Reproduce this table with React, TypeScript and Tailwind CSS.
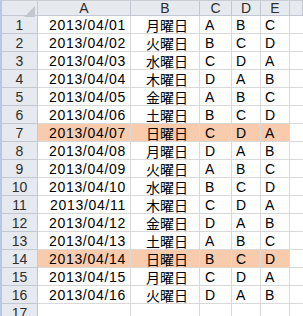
import React from 'react';

interface RowData {
    date: string
    day: string
    c: string
    d: string
    e: string
}

const rows: RowData[] = [
    { date: "2013/04/01", day: "月曜日", c: "A", d: "B", e: "C" },
    { date: "2013/04/02", day: "火曜日", c: "B", d: "C", e: "D" },
    { date: "2013/04/03", day: "水曜日", c: "C", d: "D", e: "A" },
    { date: "2013/04/04", day: "木曜日", c: "D", d: "A", e: "B" },
    { date: "2013/04/05", day: "金曜日", c: "A", d: "B", e: "C" },
    { date: "2013/04/06", day: "土曜日", c: "B", d: "C", e: "D" },
    { date: "2013/04/07", day: "日曜日", c: "C", d: "D", e: "A" },
    { date: "2013/04/08", day: "月曜日", c: "D", d: "A", e: "B" },
    { date: "2013/04/09", day: "火曜日", c: "A", d: "B", e: "C" },
    { date: "2013/04/10", day: "水曜日", c: "B", d: "C", e: "D" },
    { date: "2013/04/11", day: "木曜日", c: "C", d: "D", e: "A" },
    { date: "2013/04/12", day: "金曜日", c: "D", d: "A", e: "B" },
    { date: "2013/04/13", day: "土曜日", c: "A", d: "B", e: "C" },
    { date: "2013/04/14", day: "日曜日", c: "B", d: "C", e: "D" },
    { date: "2013/04/15", day: "月曜日", c: "C", d: "D", e: "A" },
    { date: "2013/04/16", day: "火曜日", c: "D", d: "A", e: "B" },
]

const cols = "grid grid-cols-[36px_93px_69px_32px_29px_29px_1fr]"
const latin = "font-['Liberation_Sans',sans-serif]"
const cjk = "font-['Noto_Sans_CJK_JP',sans-serif]"

const App: React.FC = () => {
    return (
        <div className="w-[303px] h-[316px] overflow-hidden bg-white flex">
            <div className="w-[2px] h-full bg-[#b7c9e2]" />
            <div className="flex-1 flex flex-col">
                <div className="h-[3px] bg-[#f3f5f8] border-b border-[#c9ced6]" />

                {/* column headers */}
                <div className={`${cols} h-[17px] bg-[#e6e9ee] text-[14px] text-[#2e2e2e] ${latin}`}>
                    <div className="border-r border-b border-[#c3c9d2] relative">
                        <svg className="absolute left-[22px] top-[5px]" width="11" height="11" viewBox="0 0 11 11">
                            <polygon points="11,0 11,11 0,11" fill="#c2c7ce" />
                        </svg>
                    </div>
                    {["A", "B", "C", "D", "E", ""].map((h, i) => (
                        <div key={i} className="border-r border-b border-[#c3c9d2] flex items-center justify-center leading-none">
                            {h}
                        </div>
                    ))}
                </div>

                {[...rows, null].map((r, i) => {
                    const hl = r && r.day === "日曜日"
                    const cell = `border-r border-b border-[#d9d9d9] flex items-center leading-none overflow-hidden pt-[1px] ${hl ? "bg-[#f8cbad]" : ""}`
                    return (
                        <div key={i} className={`${cols} h-[18px] shrink-0 text-[14px] text-black`}>
                            <div className={`bg-[#e6e9ee] border-r border-b border-[#c3c9d2] flex items-center justify-center leading-none pt-[1px] text-[#2e2e2e] ${latin}`}>
                                {i + 1}
                            </div>
                            <div className={`${cell} justify-end pr-[4px] tracking-[0.7px] ${latin}`}>{r?.date}</div>
                            <div className={`${cell} justify-center pl-[4px] ${cjk}`}>{r?.day}</div>
                            <div className={`${cell} pl-[5px] ${latin}`}>{r?.c}</div>
                            <div className={`${cell} pl-[4px] ${latin}`}>{r?.d}</div>
                            <div className={`${cell} pl-[4px] ${latin}`}>{r?.e}</div>
                            <div className="border-b border-[#d9d9d9]" />
                        </div>
                    )
                })}
            </div>
        </div>
    )
}

export default App
